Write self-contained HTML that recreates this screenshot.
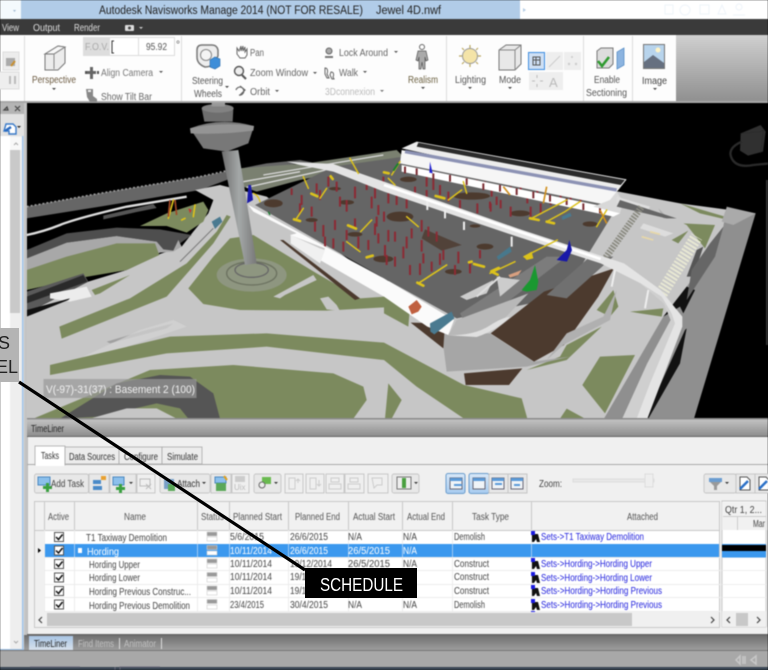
<!DOCTYPE html>
<html><head><meta charset="utf-8"><title>Navisworks</title>
<style>
html,body{margin:0;padding:0;background:#000;width:768px;height:670px;overflow:hidden}
svg{display:block}
text{font-family:"Liberation Sans",sans-serif;font-size:10px;fill:#444}
.bl{filter:blur(.5px)}
.w{fill:#fff}
.b{fill:#2222dd}
</style></head><body>
<svg width="768" height="670" viewBox="0 0 768 670" xmlns="http://www.w3.org/2000/svg">
<defs>
<linearGradient id="hd" x1="0" y1="0" x2="0" y2="1"><stop offset="0" stop-color="#c4c4c4"/><stop offset="1" stop-color="#8a8a8a"/></linearGradient>
<linearGradient id="rg" x1="0" y1="0" x2="0" y2="1"><stop offset="0" stop-color="#d0d0d0"/><stop offset="1" stop-color="#8e8e8e"/></linearGradient>
<linearGradient id="bt" x1="0" y1="0" x2="0" y2="1"><stop offset="0" stop-color="#6e6e6e"/><stop offset="1" stop-color="#a0a0a0"/></linearGradient>
<linearGradient id="tb" x1="0" y1="0" x2="0" y2="1"><stop offset="0" stop-color="#a8c4e4"/><stop offset="1" stop-color="#d8e2ec"/></linearGradient>
<linearGradient id="sh" x1="0" y1="0" x2="1" y2="0"><stop offset="0" stop-color="#6e6e6e"/><stop offset=".5" stop-color="#a4a8a8"/><stop offset="1" stop-color="#777"/></linearGradient>
<linearGradient id="hl" x1="0" y1="0" x2="0" y2="1"><stop offset="0" stop-color="#d8e8f8"/><stop offset="1" stop-color="#a8ccf0"/></linearGradient>
</defs>
<g class="bl">
<!-- title -->
<rect width="768" height="19" fill="#fff"/>
<rect x="21" width="499" height="19" fill="#b1cce8"/>
<rect x="0" width="21" height="19" fill="#f4fafd"/>
<text x="99" y="14" style="font-size:11.5px;fill:#222" textLength="264" lengthAdjust="spacingAndGlyphs">Autodesk Navisworks Manage 2014 (NOT FOR RESALE)</text>
<text x="376" y="14" style="font-size:11.5px;fill:#222" textLength="65" lengthAdjust="spacingAndGlyphs">Jewel 4D.nwf</text>
<path d="M523 8l3 2-3 2z" fill="#b5cce4"/>
<path d="M13 10l3 0-1.500 2z" fill="#a0b8d0"/>
<g fill="none" stroke="#eef4fa"><rect x="665" y="5" width="8" height="9"/><circle cx="685" cy="10" r="5"/><rect x="700" y="5" width="9" height="9"/><path d="M718 14l4-9 4 9z"/><circle cx="739" cy="7" r="3"/><path d="M733 15h12"/></g>
<!-- menu -->
<rect y="19" width="768" height="16" fill="#3a3a3a"/>
<text x="2" y="31" class="w" style="fill:#ddd" textLength="17" lengthAdjust="spacingAndGlyphs">View</text>
<text x="33" y="31" style="fill:#ddd" textLength="27" lengthAdjust="spacingAndGlyphs">Output</text>
<text x="74" y="31" style="fill:#ddd" textLength="26" lengthAdjust="spacingAndGlyphs">Render</text>
<rect x="125" y="25" width="9" height="6" rx="1" fill="#ddd"/><circle cx="129.500" cy="28" r="1.500" fill="#444"/><path d="M139 27h4l-2 2z" fill="#ccc"/>
<!-- ribbon -->
<rect y="35" width="676" height="68" fill="#fdfdfd"/>
<rect x="676" y="35" width="92" height="68" fill="url(#rg)"/>
<rect y="101" width="768" height="2" fill="#a8a8a8"/>
<g stroke="#dcdcdc"><path d="M24.500 36v65M181.500 36v65M446.500 36v65M583.500 36v65M632.500 36v65"/></g>
<!-- left mini -->
<rect x="3" y="52" width="16" height="18" fill="#ececec" stroke="#ddd"/><path d="M6 58h9v8H6z" fill="#aaa"/><path d="M11 66l4-5" stroke="#c89030" stroke-width="2"/>
<rect x="-2" y="72" width="21" height="17" fill="#eee" stroke="#ddd"/><path d="M10 76v8M15 76v8" stroke="#bbb" stroke-width="2"/>
<!-- perspective -->
<path d="M45 54l13-8 7 1v16l-7 7H45z" fill="#ececec" stroke="#777"/><path d="M45 54l13-8 7 1-11 7z" fill="#f8f8f8" stroke="#777"/><path d="M54 54v15M54 54l11-7" stroke="#888" fill="none"/>
<text x="32" y="83" style="fill:#6b5a40" textLength="44" lengthAdjust="spacingAndGlyphs">Perspective</text><path d="M52 88h4l-2 2z" fill="#444"/>
<!-- fov -->
<rect x="83.500" y="37.500" width="91" height="18" fill="#fff" stroke="#ddd"/><rect x="84" y="38" width="26" height="17" fill="#ddd"/>
<text x="85" y="50" style="fill:#aaa" textLength="24" lengthAdjust="spacingAndGlyphs">F.O.V.</text><path d="M114 41h-2v12h2" stroke="#333" fill="none"/><path d="M138.500 38v17" stroke="#ddd"/>
<text x="146" y="50" style="fill:#555" textLength="21" lengthAdjust="spacingAndGlyphs">95.92</text><text x="176" y="48" style="fill:#555">°</text>
<g fill="#555"><path d="M90 67h3v4h3v3h-3v5h-3v-5h-3v-3h3z" fill="#666"/><rect x="85" y="71" width="2" height="3"/><rect x="97" y="71" width="2" height="3"/></g>
<text x="101" y="76" style="fill:#777" textLength="52" lengthAdjust="spacingAndGlyphs">Align Camera</text><path d="M159 71h4l-2 2z" fill="#555"/>
<path d="M86 89h7v7l4 3v3h-7l-3-5z" fill="#888"/><rect x="88" y="90" width="3" height="2" fill="#eee"/>
<text x="101" y="100" style="fill:#666" textLength="51" lengthAdjust="spacingAndGlyphs">Show Tilt Bar</text>
<!-- steering -->
<path d="M197 50q0-5 5-5h10q5 0 6 5v6l-5 8q-3 3-8 3-8-3-8-10z" fill="#eee" stroke="#777" stroke-width="1.500"/><circle cx="206" cy="55" r="5.500" fill="#f4f4f4" stroke="#888"/>
<path d="M210 60l5-3 5 2v7l-5 3-5-2z" fill="#3e8ed8" stroke="#2a6aa8" stroke-width=".6"/>
<text x="192" y="84" style="fill:#555" textLength="31" lengthAdjust="spacingAndGlyphs">Steering</text><text x="194" y="97" style="fill:#555" textLength="28" lengthAdjust="spacingAndGlyphs">Wheels</text><path d="M225 86h4l-2 2z" fill="#444"/>
<!-- nav -->
<path d="M237 48v6l3 4h5l2-3v-6l-2 3v-5l-2 4v-5l-2 5v-5l-2 5z" fill="#fff" stroke="#666"/><text x="250" y="56" style="fill:#666" textLength="14" lengthAdjust="spacingAndGlyphs">Pan</text>
<circle cx="239" cy="71" r="4.500" fill="#eee" stroke="#555" stroke-width="1.400"/><path d="M242 75l4 4" stroke="#555" stroke-width="2"/><text x="250" y="76" style="fill:#666" textLength="58" lengthAdjust="spacingAndGlyphs">Zoom Window</text><path d="M313 72h4l-2 2z" fill="#555"/>
<path d="M236 90a4 4 0 1 1 3 5M240 86l5 4-5 5" fill="none" stroke="#666" stroke-width="1.200"/><text x="250" y="95" style="fill:#666" textLength="20" lengthAdjust="spacingAndGlyphs">Orbit</text><path d="M275 90h4l-2 2z" fill="#555"/>
<circle cx="329" cy="51" r="3" fill="#aaa" stroke="#666"/><path d="M325 57h8" stroke="#777" stroke-width="2"/><text x="339" y="56" style="fill:#666" textLength="49" lengthAdjust="spacingAndGlyphs">Lock Around</text><path d="M394 51h4l-2 2z" fill="#555"/>
<path d="M325 68c3 0 3 4 2 6l2 4h-2l-2-4zM331 72c3 0 3 3 2 5l1 2h-2l-2-4z" fill="#fff" stroke="#666"/><text x="339" y="76" style="fill:#666" textLength="19" lengthAdjust="spacingAndGlyphs">Walk</text><path d="M363 71h4l-2 2z" fill="#555"/>
<text x="325" y="95" style="fill:#bbb" textLength="50" lengthAdjust="spacingAndGlyphs">3Dconnexion</text><path d="M380 90h4l-2 2z" fill="#777"/>
<!-- realism -->
<circle cx="422" cy="47" r="2.500" fill="none" stroke="#666"/><path d="M418 51h8l2 9-2 1-1-4v12h-2l-1-7-1 7h-2V57l-1 4-2-1z" fill="#aaa" stroke="#555" stroke-width=".7"/>
<text x="408" y="83" style="fill:#6b6040" textLength="30" lengthAdjust="spacingAndGlyphs">Realism</text><path d="M421 87h4l-2 2z" fill="#444"/>
<!-- lighting -->
<circle cx="470" cy="56" r="7.500" fill="#f4e4a8" stroke="#999"/><g stroke="#bba860" stroke-width="1.200"><path d="M470 45v3M470 64v3M459 56h3M478 56h3M462 48l2 2M476 62l2 2M478 48l-2 2M464 62l-2 2"/></g>
<text x="455" y="83" style="fill:#555" textLength="31" lengthAdjust="spacingAndGlyphs">Lighting</text><path d="M468 87h4l-2 2z" fill="#444"/>
<!-- mode -->
<path d="M499 50l7-5h15v19l-6 6h-16z" fill="#e8e8e8" stroke="#777"/><path d="M499 50h16v20M515 50l6-5" fill="none" stroke="#888"/><text x="499" y="83" style="fill:#555" textLength="22" lengthAdjust="spacingAndGlyphs">Mode</text><path d="M508 87h4l-2 2z" fill="#444"/>
<rect x="528.500" y="52.500" width="16" height="17" fill="#cfe0f4" stroke="#3c8ce0"/><path d="M533 57h7v8h-7zM533 60h7M536 57v8" fill="none" stroke="#555"/>
<rect x="546" y="52" width="17" height="18" fill="#eee"/><path d="M549 67l11-11" stroke="#ccc"/><rect x="564" y="52" width="17" height="18" fill="#eee"/><g fill="#ccc"><circle cx="572" cy="57" r="1"/><circle cx="569" cy="64" r="1.200"/><circle cx="576" cy="64" r="1.200"/></g>
<rect x="529" y="72" width="17" height="18" fill="#eee"/><path d="M537 75v3M537 84v3M532 81h3M540 81h3" stroke="#bbb"/><rect x="546" y="72" width="17" height="18" fill="#eee"/><text x="549" y="87" style="font-size:13px;fill:#bbb">A</text>
<!-- section -->
<path d="M597 51l4-3h12v16l-4 4h-12z" fill="#ddd" stroke="#777"/><path d="M617 52l7-4v17l-7 4z" fill="#8cb4e0" stroke="#4a84c0" stroke-width=".7"/><path d="M598 61l4 5 7-9" fill="none" stroke="#2f9a30" stroke-width="2.600"/>
<text x="594" y="83" style="fill:#555" textLength="26" lengthAdjust="spacingAndGlyphs">Enable</text><text x="586" y="96" style="fill:#555" textLength="41" lengthAdjust="spacingAndGlyphs">Sectioning</text>
<!-- image -->
<rect x="643.500" y="44.500" width="21" height="24" fill="#b8d4ec" stroke="#777"/><path d="M644 62l9-7 11 8v5h-20z" fill="#667080"/><circle cx="658" cy="50" r="2.500" fill="#fff4c8"/>
<text x="642" y="84" style="fill:#444" textLength="25" lengthAdjust="spacingAndGlyphs">Image</text><path d="M653 88h4l-2 2z" fill="#444"/>

<!-- viewport -->
<rect x="27" y="103" width="741" height="316" fill="#000"/>
<svg x="27" y="103" width="741" height="316" viewBox="81 9 2223 948">
<!-- rails -->
<path d="M80 320L300 280 600 230 700 210 800 190 900 180 1000 200 1100 205 1152 215V260L900 190 760 210 600 270 300 320 80 355z" fill="#666"/>
<path d="M80 320L300 280 600 230 700 208" stroke="#999" stroke-width="5" fill="none" stroke-dasharray="6 6"/>
<path d="M720 205L920 190 1190 150 1210 170 1170 190 1020 215 900 240 770 275 730 260z" fill="#7a8070"/>
<path d="M730 245L900 215M740 262L1000 205M790 225L1150 165" stroke="#d8d8d8" stroke-width="4" fill="none"/>
<path d="M80 405q50-10 100-30t200-55l180-30" stroke="#ddd" stroke-width="7" fill="none"/>
<path d="M310 358l100-22 60-12-10-12-150 35z" fill="#555"/>
<!-- base ground -->
<path d="M80 652V640L265 545 380 510 480 462 545 440 580 395 625 340 640 300 585 270 660 255 800 290 1152 560 1200 500 1600 400 1830 270 2040 310 2190 330 2265 340 2080 956H80z" fill="#c6c6c6"/>
<path d="M420 378L500 340 610 305 625 330 610 365 560 398 500 378z" fill="#7c8a5e"/>
<path d="M80 450L200 400 350 383 480 388 575 405 540 430 520 452 480 455 470 425 350 408 200 428 80 475z" fill="#4e4e4e"/>
<path d="M80 475L200 428 350 408 470 425 490 448 520 452 535 420 545 440 520 455 480 458 380 510 250 530 80 570z" fill="#a8a8a8"/>
<path d="M80 510L200 470 350 430 465 430 478 465 380 510 250 532 80 570z" fill="#7c8a5e"/>
<path d="M80 575L250 520 265 545 205 575 80 640z" fill="#5a5a5a"/>
<path d="M80 590L250 525 262 545 80 610z" fill="#2a2a2a"/>
<path d="M150 580L260 560 275 590 210 605 150 595z" fill="#ececec"/>
<path d="M80 630L210 595 205 600 80 650z" fill="#111"/>
<path d="M275 570L390 525 300 580 285 585z" fill="#7c8a5e"/>
<path d="M178 680L390 595 560 490 650 395 680 345 692 350 640 430 500 590 185 716z" fill="#7c8a5e"/>
<path d="M540 485L640 385" stroke="#777" stroke-width="3"/>
<path d="M320 725l120-35 80-20-20 15-170 45z" fill="#a0a0a0"/>
<path d="M250 770L420 690 520 660 560 680 260 780z" fill="#d4d4d4" opacity=".7"/>
<!-- green areas -->
<path d="M565 565L640 470 690 415 760 405 950 520 1080 595 1152 590V622L980 632 720 630 610 612z" fill="#7c8a5e"/>
<path d="M820 590l120-65 10 15-95 45-15 10zM960 595l25-5 25 25 10 18-40-5z" fill="#c6c6c6"/>
<path d="M850 420L1080 595 1065 600 840 420z" fill="#4c3a2e"/>
<path d="M150 795L510 710 800 700 1152 728 1392 855 1565 895 1582 956H1392L1250 860 1152 780 800 740 500 760 150 825z" fill="#7c8a5e"/>
<path d="M100 956L450 810 700 795 1000 820 1090 860 1100 900 1060 956z" fill="#7c8a5e"/>
<path d="M180 956L350 850 480 825 570 830 640 880 660 956H565L540 925 470 910 300 950z" fill="#555"/>
<path d="M270 956L380 925 470 925 530 956z" fill="#c6c6c6"/>
<path d="M1152 570L1230 620 1225 680 1152 640z" fill="#7c8a5e"/>
<path d="M1165 850l40 50-30 56h-20z" fill="#7c8a5e"/>
<path d="M1680 956l20-30 55 30z" fill="#7c8a5e"/>
<path d="M1747 855L1800 770 1905 765 1815 940z" fill="#7c8a5e"/>
<path d="M1790 630L1840 570 1855 620 1830 650z" fill="#7c8a5e"/>
<path d="M1580 810L1700 780 1805 680 1700 735 1680 770z" fill="#7c8a5e"/>
<path d="M1890 635L1990 625 1985 650 1920 640zM2050 370L2145 375 2115 445 2060 375zM2015 420L2065 392 2035 430z" fill="#7c8a5e"/>
<path d="M2040 310L2175 350 2185 360 2100 340z" fill="#7c8a5e"/>
<!-- right road -->
<path d="M2180 320L2267 340 2082 956H1812L1990 650 2060 560 2120 480 2170 380z" fill="#8f8f8f"/>
<path d="M2180 322L2267 340 2200 375 2165 365z" fill="#aaa"/>
<path d="M1990 650L2060 560 2085 570 2050 640 2040 620z" fill="#111"/>
<path d="M2040 790L1945 956 1935 956 2055 690 2060 685z" fill="#111"/>
<path d="M2080 530L2110 440 2090 450 2060 530z" fill="#555"/>
<path d="M2130 430L2170 380 2145 470 2060 600 2075 510z" fill="#666"/>
<!-- lower apron -->
<path d="M1325 700L1470 700 1600 785 1710 770 1580 800 1340 815z" fill="#a6a6a6"/>
<path d="M1392 820L1567 805 1527 855 1397 855z" fill="#4c3a2e"/>
<!-- site -->
<path d="M765 315L1000 200 1210 170 1852 320 1760 470 1690 590 1370 655 1152 535z" fill="#656565"/>
<path d="M1472 700L1632 575 1842 505 1795 590 1692 735 1602 785z" fill="#4c3a2e"/>
<path d="M1690 735L1830 660 1850 570 1810 650 1700 700 1640 780z" fill="#b0b0b0"/>
<path d="M1232 668L1335 670 1330 745z" fill="#4c3a2e"/>
<path d="M1380 640L1640 470 1700 470 1530 600 1400 680z" fill="#7c7c7c"/>
<path d="M1640 585L1770 470 1840 470 1700 595z" fill="#707070"/>
<path d="M1380 590L1480 540 1460 580 1400 600zM1490 530L1560 540 1500 590z" fill="#ccc"/>
<path d="M1500 530l-70 60M1560 600l-120 70" stroke="#ddd" stroke-width="6"/>
<g transform="translate(720 120)" fill="#4c3a2e">
<ellipse cx="480" cy="230" rx="40" ry="15"/><ellipse cx="695" cy="168" rx="55" ry="11"/><ellipse cx="505" cy="118" rx="25" ry="8"/><ellipse cx="215" cy="240" rx="18" ry="6"/><ellipse cx="320" cy="187" rx="22" ry="7"/><ellipse cx="100" cy="190" rx="28" ry="12"/><ellipse cx="345" cy="283" rx="22" ry="7"/><ellipse cx="430" cy="357" rx="30" ry="10"/><ellipse cx="285" cy="146" rx="18" ry="5"/><ellipse cx="735" cy="320" rx="25" ry="9"/><ellipse cx="705" cy="258" rx="16" ry="5"/><ellipse cx="640" cy="395" rx="25" ry="8"/><path d="M555 268L665 315 605 332 545 295z" opacity=".8"/>
</g>
<ellipse cx="1560" cy="340" rx="30" ry="9" fill="#4c3a2e"/><ellipse cx="1770" cy="372" rx="22" ry="8" fill="#4c3a2e"/>
<!-- red columns -->
<g transform="translate(720 120)" stroke="#8c2a34" stroke-width="6" fill="none">
<path d="M155 145v20M185 165v30M180 190v30M215 200v30M230 130v30M240 150v30M265 110v30M290 125v30M300 170v30M320 180v35M345 140v35M380 120v30M405 140v35M430 110v30M395 170v35M415 195v30M410 230v30M445 160v30M470 165v30M500 175v30M525 140v30M560 110v30M580 120v30M600 135v30M560 150v30M625 155v30M660 180v30M710 120v20M735 125v20M755 145v25M770 170v25M750 185v20"/>
<path d="M225 245v30M250 255v35M255 290v30M285 240v30M280 295v30M310 305v30M320 270v30M345 235v30M355 290v35M385 300v30M405 250v35M415 280v30M435 315v35M440 345v30M465 350v30M490 320v35M445 270v35M465 275v30M500 290v35M515 265v30M545 240v35M565 260v30M590 275v30M545 300v35M550 340v30M510 375v30M540 370v35M575 365v30M600 340v35M610 330v30M655 335v35M645 375v30M690 370v30M720 330v25"/>
</g>
<path d="M1152 465v30M1532 390v25M1562 380v30M1582 410v30M1612 400v25M1652 420v25M1682 400v25M1712 405v25M1742 410v25M1592 450v30M1622 440v30M1472 440v25M1502 430v25M1532 450v30M1432 440v30" stroke="#8c2a34" stroke-width="6" fill="none" transform="translate(0 -130)"/>
<!-- wall -->
<path d="M745 315L1152 535 1362 660 1345 705 1282 680 1152 590 960 480 975 445 870 405 890 400 760 335z" fill="#fbfbfb"/>
<path d="M872 405L960 445 975 450 960 490 872 430z" fill="#f0f0f0"/>
<path d="M1370 660L1585 580 1490 680 1430 705 1390 705 1345 706z" fill="#b8b8b8"/>
<path d="M1345 706q80 0 125-30 40-25 60-25-40 40-100 60z" fill="#e0e0e0"/>
<!-- terminal -->
<path d="M1205 145L1250 125 1880 238 1855 270 1840 285z" fill="#ececec"/>
<path d="M1255 128L1875 240 1862 255 1250 140z" fill="#2b2b2b"/>
<path d="M1205 150L1850 270 1845 320 1200 190z" fill="#f6f6f6"/>
<path d="M1215 155L1850 270" stroke="#8c92b4" stroke-width="10"/>
<path d="M1205 195L1840 325 1860 340 1840 350 1205 215z" fill="#fff"/>
<path d="M1215 200v20M1250 205v20M1300 220v20M1350 225v20M1400 235v20M1450 250v20M1500 255v20M1550 265v20M1600 275v20M1650 285v20M1700 295v20M1750 310v20M1800 320v20" stroke="#7a2a30" stroke-width="6"/>
<path d="M1850 275L1870 305 1860 340 1780 320 1830 300z" fill="#d8d8d8"/>
<!-- side structures -->
<path d="M1850 290L1950 320 1940 340 1850 310z" fill="#ddd"/>
<path d="M1990 355l-15-30 30 30z" fill="#aaa"/>
<path d="M1860 300L2030 355 2000 355 1850 320z" fill="#666"/>
<path d="M1812 480L1925 320" stroke="#8a8a80" stroke-width="20" stroke-dasharray="5 4"/>
<path d="M1930 370l90 30-25 10-75-25z" fill="#ddd"/>
<path d="M1985 580L2090 410" stroke="#e8e8d4" stroke-width="38" stroke-dasharray="6 5"/>
<path d="M1950 395l30 8M1925 410l35 10" stroke="#e8d8a8" stroke-width="5"/>
<!-- elevated road -->
<path d="M860 185L1000 192 1152 245 1552 385 1872 490 1982 570 2047 650 2047 680 1942 956H1867L1942 790 2012 660 1992 610 1922 550 1802 490 1552 410 1152 275 1000 215 900 195z" fill="#e4e4e4"/>
<path d="M1867 956L1942 790 2012 660 1992 610 1922 550 1985 590 2015 640 2025 670 1950 850 1910 956z" fill="#cfcfcf"/>
<path d="M1152 255L1552 393 1802 477" stroke="#fff" stroke-width="8" fill="none"/>
<path d="M1845 510l-10 50M1945 570l-10 55M1282 305v25M1335 330v25M1392 365v25M1535 410v30" stroke="#eee" stroke-width="6"/>
<!-- machines -->
<g transform="translate(720 120)" fill="none" stroke="#dcc21c" stroke-linecap="round">
<path d="M170 235l20-30M362 275l33-35M320 305l40 30M240 175l20-30M330 55l25 45M190 110l15 35M455 105l25-40M445 115l20 20M500 230l35 30M625 180l40-30M670 125l10 35" stroke-width="4.500"/>
<path d="M535 430l85-55" stroke-width="5" stroke-dasharray="5 2"/>
<path d="M162 238l18 5M324 256l24 10M380 352l18-5M214 161l18 8M272 109l6 8M432 97l14 3M587 168l26 7M532 428l18 9M687 367l8-2M702 372l30 8M754 394l22-10" stroke-width="8"/>
<path d="M40 160q15 5 20 25" stroke-width="4"/>
</g>
<g fill="none" stroke="#dcc21c" stroke-linecap="round">
<path d="M505 355l15-55M545 360l10-5M580 350l5-35" stroke-width="5"/>
<path d="M1470 520l75-35M1572 470l100-50M1595 355l105-55M1640 365l55-30 45-30M1790 380l30-50" stroke-width="4.500"/>
<path d="M1475 515l18 9M1590 355l26 5M1640 365l22 5" stroke-width="8"/>
</g>
<path d="M1570 470l25-15 5 20-20 5z" fill="#dcc21c"/>
<path d="M510 300l-5 50M525 300l5 45" stroke="#a04828" stroke-width="5"/>
<path d="M1510 260l20 25M1640 260l-10 50M1800 330l20 40" stroke="#d09020" stroke-width="5"/>
<!-- blue + green -->
<path d="M745 255l8 0 6 45-18 10z" fill="#1a1aa8"/><path d="M1290 185l8 35-10-2z" fill="#2020d0"/>
<path d="M1670 480l30-30 8-30 8 30-15 35z" fill="#1818a8"/>
<path d="M1565 570l25-30 15-45 10 50-5 25-30 5z" fill="#1a9830"/>
<path d="M1195 190l-15 22" stroke="#1a8030" stroke-width="6"/>
<path d="M805 335l5 10" stroke="#1a8030" stroke-width="4"/>
<!-- buses -->
<path d="M1290 670l65-35 8 20-60 48-12-8z" fill="#4a7a90"/><path d="M1490 470l40-30 5 15-40 25z" fill="#48788c"/>
<path d="M635 365l25-15 7 15-22 22z" fill="#4a7a90"/><path d="M1685 350l25-12 5 10-28 12z" fill="#4a7a90"/>
<path d="M1225 620l25-20 15 20-10 15-20 8z" fill="#c06040"/><path d="M1525 525l40-15-10 15-25 8z" fill="#d8a080"/>
<path d="M565 325l10 5-5 10z" fill="#c83030"/>
<!-- tower -->
<ellipse cx="755" cy="525" rx="105" ry="50" fill="#8e9680"/>
<ellipse cx="755" cy="520" rx="75" ry="35" fill="none" stroke="#6c7260" stroke-width="4"/>
<ellipse cx="755" cy="510" rx="50" ry="22" fill="none" stroke="#666" stroke-width="4"/>
<path d="M665 155L715 150 770 490 735 495z" fill="url(#sh)"/>
<path d="M605 25h95l-2 40 25 0-40 0-70 0z" fill="#6e6e6e"/>
<ellipse cx="653" cy="25" rx="48" ry="13" fill="#828282"/>
<path d="M570 85Q660 50 762 78L745 130 680 155 610 145z" fill="#787878"/>
<path d="M570 85Q660 65 762 78L760 92Q660 105 572 100z" fill="#949494"/>
<rect x="635" y="9" width="40" height="10" fill="#999"/>
<!-- cube -->
<path d="M2222 100l60-25 15 20-8 60-45 12-24-15z" fill="#303030"/>
<path d="M2222 100l60-5 8-5-8 70" stroke="#222" fill="none"/>
<path d="M2225 125q-45 20-30 50t65 20l50-5" fill="none" stroke="#2a2a2a" stroke-width="7"/>
</svg>
<rect x="766" y="180" width="2" height="165" fill="#333"/>
<!-- overlay -->
<rect x="43.500" y="379" width="153" height="19" fill="#999" opacity=".7"/>
<text x="46" y="393" style="font-size:11px;fill:#f0f0f0" textLength="149" lengthAdjust="spacingAndGlyphs">V(-97)-31(37) : Basement 2 (100)</text>

<!-- left panel -->
<rect x="0" y="103" width="27" height="548" fill="#e6e6e6"/>
<rect x="0" y="103" width="27" height="11" fill="#b4b4b4"/>
<path d="M4 110l3-3 1 3-2 0zM15 106l5 5M20 106l-5 5" stroke="#444" fill="none" stroke-width="1.200"/>
<rect x="0" y="114" width="23" height="22" fill="#e2e2e2"/>
<path d="M6 124h7l3 3v7H9v-3H4z" fill="#fff" stroke="#3a7ac8" stroke-width="1.400"/><path d="M5 131l6-4" stroke="#2a6ac0" stroke-width="2.500"/><path d="M17 126h4l-2 2z" fill="#222"/>
<rect x="0" y="136" width="10" height="513" fill="#fff"/>
<rect x="10" y="136" width="12" height="513" fill="#eee"/>
<rect x="10" y="150" width="10" height="163" fill="#c9c9c9"/>
<rect x="10" y="137" width="12" height="13" fill="#f8f8f8"/>
<path d="M14 145l2-2 2 2" stroke="#aaa" fill="none"/><path d="M14 641l2 2 2-2" stroke="#aaa" fill="none"/>
<rect x="22" y="136" width="1.500" height="514" fill="#9ec2e8"/><rect x="0" y="649" width="24" height="1.500" fill="#9ec2e8"/>
<rect x="24" y="103" width="3" height="548" fill="#c4c4c4"/>

<!-- timeliner -->
<rect x="27" y="419" width="741" height="18" fill="url(#hd)"/>
<rect x="27" y="418" width="741" height="1.500" fill="#8c8c8c"/>
<rect x="27" y="436" width="741" height="1" fill="#666"/>
<text x="31" y="432" style="fill:#222" textLength="33" lengthAdjust="spacingAndGlyphs">TimeLiner</text>
<rect x="27" y="437" width="741" height="198" fill="#f0f0f0"/>
<rect x="27" y="437" width="1" height="198" fill="#bbb"/>
<!-- tabs -->
<path d="M27 464.500H768" stroke="#aaa"/>
<rect x="35" y="446" width="30" height="19" fill="#fff" stroke="#aaa" stroke-width=".8"/><rect x="65" y="447" width="54" height="17" fill="#ececec" stroke="#aaa" stroke-width=".8"/><rect x="119" y="447" width="43" height="17" fill="#ececec" stroke="#aaa" stroke-width=".8"/><rect x="162" y="447" width="40" height="17" fill="#ececec" stroke="#aaa" stroke-width=".8"/>
<rect x="35.500" y="463" width="29" height="3" fill="#fff"/>
<text x="41" y="459" style="fill:#333" textLength="18" lengthAdjust="spacingAndGlyphs">Tasks</text><text x="69" y="460" style="fill:#333" textLength="46" lengthAdjust="spacingAndGlyphs">Data Sources</text><text x="124" y="460" style="fill:#333" textLength="34" lengthAdjust="spacingAndGlyphs">Configure</text><text x="167" y="460" style="fill:#333" textLength="31" lengthAdjust="spacingAndGlyphs">Simulate</text>
<!-- toolbar -->
<g fill="#e8e8e8" stroke="#c4c4c4" stroke-width=".9">
<rect x="34.500" y="474" width="54" height="19" rx="2"/><rect x="89" y="474" width="20" height="19"/><rect x="110" y="474" width="26" height="19"/><rect x="137" y="474" width="18" height="19" fill="#efefef"/>
<rect x="160" y="474" width="50" height="19" rx="2"/><rect x="211" y="474" width="20" height="19"/><rect x="232" y="474" width="17" height="19" fill="#efefef"/>
<rect x="254" y="474" width="27" height="19" rx="2"/><rect x="285" y="474" width="18" height="19" fill="#efefef"/><rect x="306" y="474" width="18" height="19" fill="#efefef"/><rect x="326" y="474" width="18" height="19" fill="#efefef"/><rect x="345" y="474" width="19" height="19" fill="#efefef"/><rect x="368" y="474" width="20" height="19" fill="#efefef"/>
<rect x="392" y="474" width="27" height="19" rx="2"/><rect x="704" y="474" width="32" height="19" rx="2"/><rect x="736" y="474" width="19" height="19"/><rect x="755" y="474" width="18" height="19"/>
</g>
<rect x="446" y="473.500" width="19" height="20" rx="2" fill="url(#hl)" stroke="#6a9ccc"/>
<rect x="469" y="473.500" width="20" height="20" rx="2" fill="url(#hl)" stroke="#6a9ccc"/>
<rect x="489" y="474" width="19" height="19" fill="#e8e8e8" stroke="#c4c4c4"/><rect x="508" y="474" width="19" height="19" fill="#e8e8e8" stroke="#c4c4c4"/>
<!-- tb icons -->
<rect x="38" y="477" width="12" height="8" fill="#8cc0ec" stroke="#4a88c0"/><path d="M46 483h3v3h3v3h-3v3h-3v-3h-3v-3h3z" fill="#3aa040"/>
<text x="51" y="487" style="fill:#444" textLength="33" lengthAdjust="spacingAndGlyphs">Add Task</text>
<rect x="93" y="480" width="8" height="4" fill="#4a8ac8"/><rect x="93" y="486" width="9" height="4" fill="#4a8ac8"/><rect x="101" y="476" width="5" height="4" fill="#e8a030"/>
<rect x="113" y="477" width="11" height="8" fill="#8cc0ec" stroke="#4a88c0"/><path d="M119 484h3v3h3v3h-3v3h-3v-3h-3v-3h3z" fill="#3aa040"/><path d="M129 482h4l-2 2z" fill="#333"/>
<rect x="140" y="479" width="10" height="7" fill="none" stroke="#bbb"/><path d="M146 484l5 5M151 484l-5 5" stroke="#bbb"/>
<rect x="164" y="479" width="10" height="10" fill="#78a0c8"/><rect x="168" y="484" width="7" height="7" fill="#5aa858"/>
<text x="177" y="487" style="fill:#333" textLength="23" lengthAdjust="spacingAndGlyphs">Attach</text><path d="M202 482h4l-2 2z" fill="#333"/>
<rect x="215" y="477" width="11" height="6" fill="#8cc0ec" stroke="#4a88c0"/><rect x="216" y="483" width="10" height="8" fill="#5aa858"/><path d="M224 476l3 4" stroke="#e0a020" stroke-width="2"/>
<rect x="235" y="476" width="10" height="6" fill="#ccc"/><text x="234" y="490" style="font-size:8px;fill:#bbb">Uix</text>
<rect x="262" y="477" width="9" height="7" fill="#6aba50"/><circle cx="262" cy="485" r="3" fill="#eee" stroke="#666"/><path d="M274 482h4l-2 2z" fill="#333"/>
<g fill="none" stroke="#ccc"><path d="M289 478h6v11h-6zM298 483v-4M296 481l2-2 2 2"/><path d="M310 478h6v11h-6zM319 480v6M317 484l2 2 2-2"/><path d="M331 478h8v4h-8zM329 484h12v5h-12z"/><path d="M350 478h8v4h-8zM348 484h12v5h-12z"/><path d="M372 478h10v7h-5l-3 3z"/></g>
<rect x="397" y="477" width="14" height="12" fill="#eee" stroke="#777"/><rect x="402" y="478" width="4" height="10" fill="#4aa040"/><path d="M414 482h4l-2 2z" fill="#333"/>
<g fill="#f0f4f8" stroke="#667"><rect x="450" y="478" width="12" height="11"/><rect x="473" y="478" width="12" height="11"/><rect x="492" y="478" width="12" height="11"/><rect x="511" y="478" width="12" height="11"/></g>
<g fill="#5a9ad8"><rect x="450" y="478" width="12" height="3"/><rect x="473" y="478" width="12" height="3"/><rect x="492" y="478" width="12" height="3"/><rect x="511" y="478" width="12" height="3"/><rect x="454" y="484" width="8" height="2"/><rect x="495" y="483" width="7" height="2"/><rect x="514" y="484" width="6" height="2"/></g>
<text x="539" y="487" style="fill:#444" textLength="23" lengthAdjust="spacingAndGlyphs">Zoom:</text>
<rect x="573" y="479" width="81" height="3" fill="#e8e8e8" stroke="#ddd"/><rect x="645" y="474" width="8" height="13" fill="#eee" stroke="#ddd"/>
<rect x="709" y="478" width="13" height="4" fill="#6a9cd0"/><path d="M710 482h11l-4 4v4h-3v-4z" fill="#999"/><path d="M725 482h4l-2 2z" fill="#333"/>
<g fill="#fff" stroke="#555"><path d="M740 477h7l3 3v10h-10z"/><path d="M759 477h7l3 3v10h-10z"/></g><path d="M740 489l8-8M759 489l8-8" stroke="#2a70c8" stroke-width="2.500"/>
<!-- table -->
<rect x="34" y="501" width="686" height="126" fill="#fff"/>
<rect x="34" y="502" width="686" height="28" fill="#f1f1f1"/>
<rect x="34" y="530" width="10" height="82" fill="#f0f0f0"/>
<rect x="34" y="544" width="686" height="13.500" fill="#3b98ee"/>
<rect x="34" y="544" width="10" height="13.500" fill="#f0f0f0"/>
<path d="M38 548l3 2.500-3 2.500z" fill="#000"/>
<g stroke="#c8c8c8"><path d="M34.500 501V627M44.500 502v28M74.500 502v28M197.500 502v28M229.500 502v28M288.500 502v28M348.500 502v28M402.500 502v28M452.500 502v28M531.500 502v28M719.500 501V627M34 501.500H720M34 530.500H720"/></g>
<g stroke="#ececec"><path d="M44.500 530v82M74.500 530v82M197.500 530v82M229.500 530v82M288.500 530v82M348.500 530v82M402.500 530v82M452.500 530v82M531.500 530v82M44 557.500H720M44 570.500H720M44 584.500H720M44 597.500H720M44 611.500H720"/></g>
<g stroke="#9cc8f4"><path d="M74.500 544v13M197.500 544v13M229.500 544v13M288.500 544v13M348.500 544v13M402.500 544v13M452.500 544v13M531.500 544v13"/></g>
<g>
<text x="48" y="520" textLength="21" lengthAdjust="spacingAndGlyphs" style="fill:#555">Active</text><text x="124" y="520" textLength="22" lengthAdjust="spacingAndGlyphs" style="fill:#555">Name</text><text x="201" y="520" textLength="23" lengthAdjust="spacingAndGlyphs" style="fill:#555">Status</text><text x="233" y="520" textLength="49" lengthAdjust="spacingAndGlyphs" style="fill:#555">Planned Start</text><text x="295" y="520" textLength="45" lengthAdjust="spacingAndGlyphs" style="fill:#555">Planned End</text><text x="353" y="520" textLength="42" lengthAdjust="spacingAndGlyphs" style="fill:#555">Actual Start</text><text x="407" y="520" textLength="38" lengthAdjust="spacingAndGlyphs" style="fill:#555">Actual End</text><text x="472" y="520" textLength="37" lengthAdjust="spacingAndGlyphs" style="fill:#555">Task Type</text><text x="627" y="520" textLength="31" lengthAdjust="spacingAndGlyphs" style="fill:#555">Attached</text>
</g>
<!-- checkboxes -->
<g fill="#fff" stroke="#555"><rect x="54.500" y="532.500" width="9" height="9"/><rect x="54.500" y="546" width="9" height="9"/><rect x="54.500" y="559.500" width="9" height="9"/><rect x="54.500" y="573" width="9" height="9"/><rect x="54.500" y="586.500" width="9" height="9"/><rect x="54.500" y="600" width="9" height="9"/></g>
<g fill="none" stroke="#111" stroke-width="1.500"><path d="M56 537l2.500 2.500 4-5"/><path d="M56 550.500l2.500 2.500 4-5"/><path d="M56 564l2.500 2.500 4-5"/><path d="M56 577.500l2.500 2.500 4-5"/><path d="M56 591l2.500 2.500 4-5"/><path d="M56 604.500l2.500 2.500 4-5"/></g>
<!-- status bars -->
<g fill="#999" stroke="#ccc" stroke-width=".6"><rect x="207" y="532" width="10" height="4"/><rect x="207" y="545.500" width="10" height="4"/><rect x="207" y="559" width="10" height="4"/><rect x="207" y="572.500" width="10" height="4"/><rect x="207" y="586" width="10" height="4"/><rect x="207" y="599.500" width="10" height="4"/></g>
<g fill="#fff" stroke="#ccc" stroke-width=".6"><rect x="207" y="537" width="10" height="4"/><rect x="207" y="551" width="10" height="4"/><rect x="207" y="564" width="10" height="4"/><rect x="207" y="578" width="10" height="4"/><rect x="207" y="591" width="10" height="4"/><rect x="207" y="605" width="10" height="4"/></g>
<!-- rows -->
<text x="86" y="541" textLength="81" lengthAdjust="spacingAndGlyphs">T1 Taxiway Demolition</text><text x="230" y="540" textLength="34" lengthAdjust="spacingAndGlyphs">5/6/2015</text><text x="290" y="540" textLength="38" lengthAdjust="spacingAndGlyphs">26/6/2015</text><text x="348" y="540" textLength="14" lengthAdjust="spacingAndGlyphs">N/A</text><text x="403" y="540" textLength="14" lengthAdjust="spacingAndGlyphs">N/A</text><text x="454" y="540" textLength="31" lengthAdjust="spacingAndGlyphs">Demolish</text>
<rect x="78" y="548" width="4" height="5" fill="#fff"/>
<g><text x="87" y="555" class="w" textLength="32" lengthAdjust="spacingAndGlyphs">Hording</text><text x="230" y="554" class="w" textLength="42" lengthAdjust="spacingAndGlyphs">10/11/2014</text><text x="290" y="554" class="w" textLength="38" lengthAdjust="spacingAndGlyphs">26/6/2015</text><text x="348" y="554" class="w" textLength="42" lengthAdjust="spacingAndGlyphs">26/5/2015</text><text x="403" y="554" class="w" textLength="14" lengthAdjust="spacingAndGlyphs">N/A</text></g>
<text x="89" y="568" textLength="51" lengthAdjust="spacingAndGlyphs">Hording Upper</text><text x="230" y="567" textLength="42" lengthAdjust="spacingAndGlyphs">10/11/2014</text><text x="290" y="567" textLength="42" lengthAdjust="spacingAndGlyphs">19/12/2014</text><text x="348" y="567" textLength="42" lengthAdjust="spacingAndGlyphs">26/5/2015</text><text x="403" y="567" textLength="14" lengthAdjust="spacingAndGlyphs">N/A</text><text x="454" y="567" textLength="35" lengthAdjust="spacingAndGlyphs">Construct</text>
<text x="89" y="581" textLength="51" lengthAdjust="spacingAndGlyphs">Hording Lower</text><text x="230" y="580" textLength="42" lengthAdjust="spacingAndGlyphs">10/11/2014</text><text x="290" y="580" textLength="42" lengthAdjust="spacingAndGlyphs">19/12/2014</text><text x="454" y="580" textLength="35" lengthAdjust="spacingAndGlyphs">Construct</text>
<text x="89" y="595" textLength="102" lengthAdjust="spacingAndGlyphs">Hording Previous Construc...</text><text x="230" y="594" textLength="42" lengthAdjust="spacingAndGlyphs">10/11/2014</text><text x="290" y="594" textLength="42" lengthAdjust="spacingAndGlyphs">19/12/2014</text><text x="454" y="594" textLength="35" lengthAdjust="spacingAndGlyphs">Construct</text>
<text x="89" y="609" textLength="101" lengthAdjust="spacingAndGlyphs">Hording Previous Demolition</text><text x="230" y="608" textLength="34" lengthAdjust="spacingAndGlyphs">23/4/2015</text><text x="290" y="608" textLength="38" lengthAdjust="spacingAndGlyphs">30/4/2015</text><text x="348" y="608" textLength="14" lengthAdjust="spacingAndGlyphs">N/A</text><text x="403" y="608" textLength="14" lengthAdjust="spacingAndGlyphs">N/A</text><text x="454" y="608" textLength="31" lengthAdjust="spacingAndGlyphs">Demolish</text>
<g><path d="M532 531h3v3h3l2 8h-3l-1-3-2 3h-2z" fill="#111"/><rect x="531" y="531" width="4" height="4" fill="#1a1ae0"/><path d="M532 558h3v3h3l2 8h-3l-1-3-2 3h-2z" fill="#111"/><rect x="531" y="558" width="4" height="4" fill="#1a1ae0"/><path d="M532 572h3v3h3l2 8h-3l-1-3-2 3h-2z" fill="#111"/><rect x="531" y="572" width="4" height="4" fill="#1a1ae0"/><path d="M532 585h3v3h3l2 8h-3l-1-3-2 3h-2z" fill="#111"/><rect x="531" y="585" width="4" height="4" fill="#1a1ae0"/><path d="M532 599h3v3h3l2 8h-3l-1-3-2 3h-2z" fill="#111"/><rect x="531" y="599" width="4" height="4" fill="#1a1ae0"/><rect x="531" y="611" width="4" height="2" fill="#1a1ae0"/></g>
<text x="541" y="540" class="b" textLength="103" lengthAdjust="spacingAndGlyphs">Sets-&gt;T1 Taxiway Demolition</text>
<text x="541" y="567" class="b" textLength="111" lengthAdjust="spacingAndGlyphs">Sets-&gt;Hording-&gt;Hording Upper</text>
<text x="541" y="581" class="b" textLength="111" lengthAdjust="spacingAndGlyphs">Sets-&gt;Hording-&gt;Hording Lower</text>
<text x="541" y="594" class="b" textLength="121" lengthAdjust="spacingAndGlyphs">Sets-&gt;Hording-&gt;Hording Previous</text>
<text x="541" y="608" class="b" textLength="121" lengthAdjust="spacingAndGlyphs">Sets-&gt;Hording-&gt;Hording Previous</text>
<!-- hscroll -->
<rect x="35" y="612" width="684" height="15" fill="#f0f0f0"/><rect x="47" y="613" width="585" height="13" fill="#c8c8c8"/>
<path d="M42 617l-3 3 3 3M711 617l3 3-3 3" fill="none" stroke="#444" stroke-width="1.200"/>
<path d="M34 627.500H720" stroke="#c8c8c8"/>
<!-- gantt -->
<rect x="722" y="501" width="44" height="126" fill="#fff" stroke="#c8c8c8"/>
<rect x="722" y="502" width="44" height="28" fill="#f1f1f1"/>
<text x="725" y="513" style="fill:#444" textLength="37" lengthAdjust="spacingAndGlyphs">Qtr 1, 2...</text><path d="M723 516.500H766M737.500 517v13" stroke="#ccc"/>
<text x="753" y="527" style="fill:#444" textLength="12" lengthAdjust="spacingAndGlyphs">Mar</text>
<path d="M722 557.500H766M722 570.500H766M722 584.500H766M722 597.500H766M722 611.500H766" stroke="#eee"/>
<rect x="722" y="544" width="44" height="13.500" fill="#3b98ee"/><rect x="722" y="545" width="44" height="6" fill="#000"/>
<rect x="722" y="612" width="44" height="15" fill="#f0f0f0"/><rect x="736" y="613" width="12" height="13" fill="#c8c8c8"/>
<path d="M730 617l-3 3 3 3M757 617l3 3-3 3" fill="none" stroke="#444" stroke-width="1.200"/>
<rect x="766" y="530" width="2" height="97" fill="#ddd"/>
<!-- bottom tabs -->
<rect x="24" y="635" width="744" height="16" fill="url(#bt)"/>
<rect x="27" y="634" width="741" height="1.500" fill="#666"/>
<rect x="29" y="636" width="44" height="14" fill="url(#tb)"/>
<text x="34" y="647" style="fill:#222" textLength="33" lengthAdjust="spacingAndGlyphs">TimeLiner</text>
<text x="78" y="647" style="fill:#c0c0c0" textLength="36" lengthAdjust="spacingAndGlyphs">Find Items</text><path d="M119.500 638v11M161.500 638v11" stroke="#ddd"/><text x="124" y="647" style="fill:#c0c0c0" textLength="32" lengthAdjust="spacingAndGlyphs">Animator</text>
<!-- status -->
<rect x="0" y="651" width="768" height="16" fill="#a8a8a8"/>
<rect x="0" y="650" width="768" height="1" fill="#777"/>
<rect x="0" y="667" width="768" height="3" fill="#3a4654"/>
<path d="M160 667h-40v3M80 667h-50M115 667v3" stroke="#667" fill="none"/>
<path d="M740 656l-4 4 4 4zM743 656v8M745 656v8M756 656l-5 4 5 4z" fill="none" stroke="#c8c8c8" stroke-width="1.500"/>
</g>
<!-- annotations -->
<rect x="0" y="328" width="19" height="54" fill="#b4b4b4"/>
<text x="-2" y="349" style="font-size:18px;fill:#222">S</text>
<text x="-4" y="373" style="font-size:18px;fill:#222">EL</text>
<path d="M19 382L305 570" stroke="#000" stroke-width="3.200"/>
<rect x="305" y="568" width="112" height="30" fill="#000"/>
<text x="320" y="591" style="font-size:18px;fill:#fff" textLength="83" lengthAdjust="spacingAndGlyphs">SCHEDULE</text>
</svg>
</body></html>
